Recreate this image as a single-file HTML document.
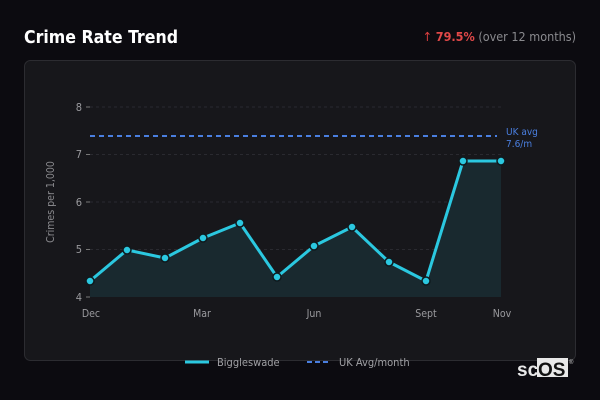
<!DOCTYPE html>
<html><head><meta charset="utf-8"><style>
html,body{margin:0;padding:0;width:600px;height:400px;background:#0c0b10;overflow:hidden;font-family:"Liberation Sans","DejaVu Sans",sans-serif}
</style></head><body>
<svg width="600" height="400" xmlns="http://www.w3.org/2000/svg" style="position:absolute;left:0;top:0">
<text x="24" y="43" fill="#fff" font-size="18" font-weight="bold" font-family="DejaVu Sans Condensed, DejaVu Sans, sans-serif" textLength="154" lengthAdjust="spacingAndGlyphs">Crime Rate Trend</text>
<text x="576" y="41" text-anchor="end" font-size="12.5" font-family="DejaVu Sans Condensed, DejaVu Sans, sans-serif"><tspan fill="#e04040">↑ </tspan><tspan fill="#e04848" font-weight="bold">79.5%</tspan><tspan fill="#8a8a8e"> (over 12 months)</tspan></text>
<rect x="24.5" y="60.5" width="551" height="300" rx="6" fill="#17171b" stroke="#2c2c31"/>
<g stroke="#2a2a30" stroke-dasharray="3,3" stroke-width="1">
<line x1="90" x2="501" y1="107" y2="107"/><line x1="90" x2="501" y1="154.5" y2="154.5"/>
<line x1="90" x2="501" y1="202" y2="202"/><line x1="90" x2="501" y1="249.5" y2="249.5"/>
</g>
<g stroke="#777" stroke-width="1"><line x1="86" x2="90" y1="107" y2="107"/><line x1="86" x2="90" y1="154.5" y2="154.5"/><line x1="86" x2="90" y1="202" y2="202"/><line x1="86" x2="90" y1="249.5" y2="249.5"/><line x1="86" x2="90" y1="297" y2="297"/></g>
<g fill="#9a9a9e" font-size="11" font-family="DejaVu Sans Condensed, DejaVu Sans, sans-serif" text-anchor="end">
<text x="82" y="111">8</text><text x="82" y="158">7</text><text x="82" y="206">6</text><text x="82" y="253">5</text><text x="82" y="301">4</text></g>
<text transform="translate(54,202) rotate(-90)" text-anchor="middle" fill="#8a8a8e" font-size="10.5" font-family="DejaVu Sans Condensed, DejaVu Sans, sans-serif">Crimes per 1,000</text>
<path d="M90,281 L127,250 L165,258 L203,238 L240,223 L277,277 L314,246 L352,227 L389,262 L426,281 L463,161 L501,161 L501,297 L90,297Z" fill="#19292f"/>
<line x1="90" x2="497" y1="136" y2="136" stroke="#4a7fe0" stroke-width="2" stroke-dasharray="5,4"/>
<text x="506" y="135" fill="#4a7fe0" font-size="10" font-family="DejaVu Sans Condensed, DejaVu Sans, sans-serif">UK avg</text>
<text x="506" y="147" fill="#4a7fe0" font-size="10" font-family="DejaVu Sans Condensed, DejaVu Sans, sans-serif">7.6/m</text>
<polyline points="90,281 127,250 165,258 203,238 240,223 277,277 314,246 352,227 389,262 426,281 463,161 501,161" fill="none" stroke="#2bc8e0" stroke-width="3" stroke-linejoin="round"/>
<g fill="#2bc8e0" stroke="#0f1a1e" stroke-width="1.5">
<circle cx="90" cy="281" r="4"/><circle cx="127" cy="250" r="4"/><circle cx="165" cy="258" r="4"/><circle cx="203" cy="238" r="4"/><circle cx="240" cy="223" r="4"/><circle cx="277" cy="277" r="4"/><circle cx="314" cy="246" r="4"/><circle cx="352" cy="227" r="4"/><circle cx="389" cy="262" r="4"/><circle cx="426" cy="281" r="4"/><circle cx="463" cy="161" r="4"/><circle cx="501" cy="161" r="4"/></g>
<g fill="#9a9a9e" font-size="10.5" font-family="DejaVu Sans Condensed, DejaVu Sans, sans-serif" text-anchor="middle">
<text x="91" y="317">Dec</text><text x="202" y="317">Mar</text><text x="314" y="317">Jun</text><text x="426" y="317">Sept</text><text x="502" y="317">Nov</text></g>
<line x1="185" x2="209" y1="362" y2="362" stroke="#2bc8e0" stroke-width="3"/>
<text x="217" y="366" fill="#a0a0a4" font-size="11" font-family="DejaVu Sans Condensed, DejaVu Sans, sans-serif">Biggleswade</text>
<line x1="307" x2="330" y1="362" y2="362" stroke="#4a7fe0" stroke-width="2" stroke-dasharray="5,3"/>
<text x="339" y="366" fill="#a0a0a4" font-size="11" font-family="DejaVu Sans Condensed, DejaVu Sans, sans-serif">UK Avg/month</text>
<rect x="537" y="358" width="31" height="19" fill="#e8e8e8"/>
<text x="517" y="376" fill="#e8e8e8" font-size="19" font-weight="bold" font-family="Liberation Sans, sans-serif">sc</text>
<text x="538" y="376" fill="#111" font-size="19" font-weight="bold" font-family="Liberation Sans, sans-serif">OS</text>
<text x="569" y="364" fill="#ccc" font-size="6">®</text>
</svg>
</body></html>
